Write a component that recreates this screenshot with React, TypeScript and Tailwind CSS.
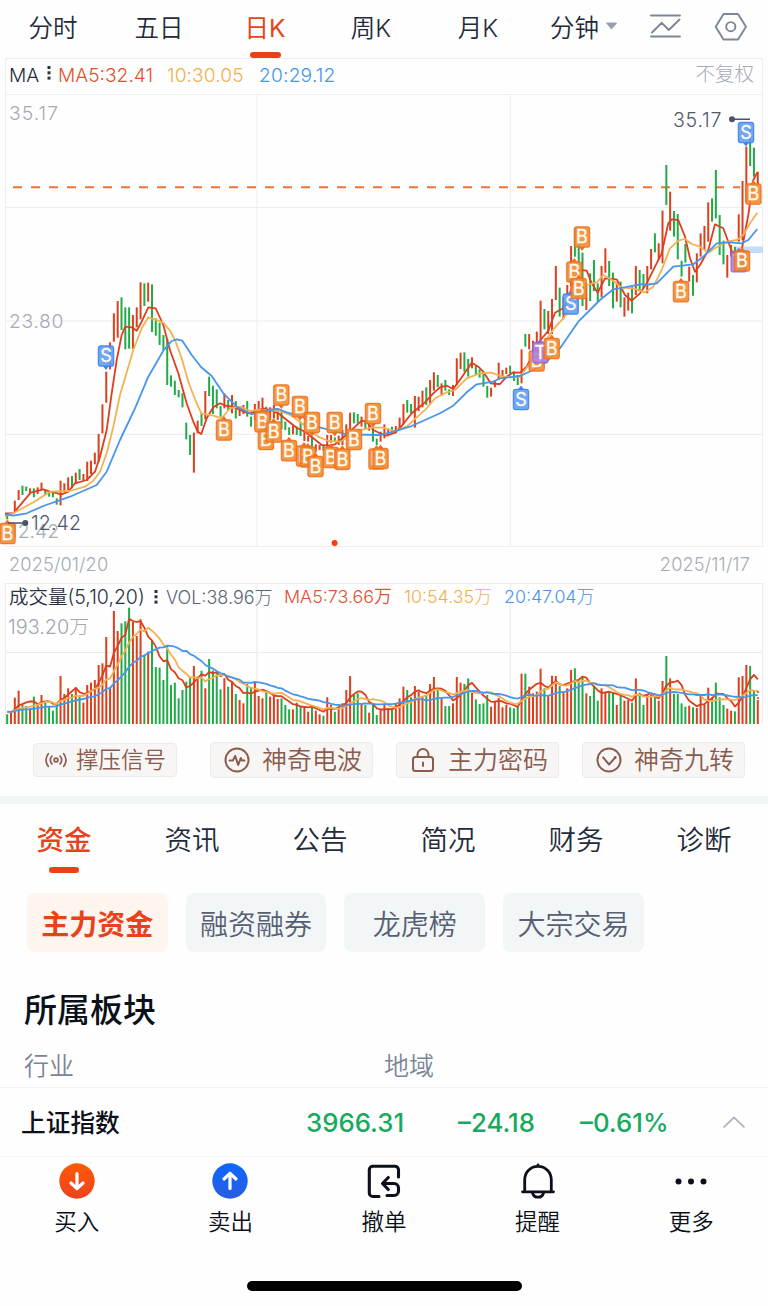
import type { ReactNode } from 'react';

const STEP = 3.81;
const FIRST_X = 7.2;
const RED = '#dd3f1d';
const GREEN = '#1fab47';
const YELLOW = '#f2b252';
const BLUE = '#4795ec';
const FONT = 'font-[Inter,"Noto_Sans_CJK_SC",sans-serif]';

const barX = (i: number) => FIRST_X + i * STEP;

/* Candles: direction, high and low, in thirds of a pixel below the block's base line. */
const candleBlocks: { start: number; base: number; rows: string }[] = [
  {
    start: 0,
    base: 270,
    rows: 'g733,748 r728,738 r692,725 r660,690 g647,675 g650,663 r655,672 g655,682 r652,672 r638,660 g660,675 g665,680 g668,682 g685,704 r632,706 r640,665 r622,660 g618,655 r608,640 g597,630 r612,632 r575,633 r572,612 r548,583 r492,575 r403,490 r305,398 r217,298 r130,215 r93,203 g82,180 g112,238 g112,236 r135,236 r112,172 r37,148 g40,108 r38,95 g43,186 g145,197 g158,225 g195,240 g207,345 g316,350 g332,375 g360,382 g370,412 g458,508 g495,555 r488,608 r452,490 g430,468 r363,448 g320,378 g347,432 g358,415 g408,440 r370,415 g390,420 r375,430 g393,445 r410,438 r405,432 g393,440',
  },
  {
    start: 64,
    base: 330,
    rows: 'g260,290 r222,270 r213,240 r203,240 g230,255 r232,270 r225,265 r235,270 g240,298 g275,300 g292,315 r288,313 g290,315 g275,318 r300,333 r318,335 g320,350 r343,365 r345,360 g345,362 r315,350 r315,338 g322,335 r317,345 r300,345 r283,320 r248,300 g247,280 g252,280 r260,290 g270,295 r280,302 g290,335 g326,345 r305,335 r283,325 r298,315 g290,308 r288,310 r263,298 r222,283 g210,248 g222,250 r198,293 r200,243 r182,232 g172,225 r150,222 r127,182 g135,172 r160,198 g150,182 g178,195 r165,198 r85,165 r68,117 g67,125 g87,140 r82,115 g105,135 g118,143 g125,170 g168,203 r173,200 r150,172 r98,150',
  },
  {
    start: 130,
    base: 220,
    rows: 'r450,468 r443,462 g437,460 g455,483 g465,495 r388,490 g342,380 r342,388 r362,420 r335,400 r242,360 g267,328 r273,342 r237,342 r138,240 g203,290 r232,298 r195,225 r78,200 g25,110 g75,130 g98,258 r190,270 g160,243 g120,213 g190,245 r138,232 r85,158 g123,198 g158,265 r187,245 g185,262 r232,290 r218,272 g200,280 r138,225 g150,213 g162,205 r138,220 r87,148 g40,97 r70,118',
  },
  {
    start: 172,
    base: 90,
    rows: 'r362,520 g225,345 r305,422 g363,440 g372,508 g512,560 g462,518 r530,575 g555,617 r490,577 r430,500 r408,480 r337,455 g325,395 g240,385 g375,495 g452,523 r495,563 r465,500 g470,500 r373,455 r273,450 r170,335 g110,228 g173,260 r245,285',
  },
];

const candles = candleBlocks.flatMap(({ start, base, rows }) =>
  rows.split(' ').map((row, k) => {
    const [hi, lo] = row.slice(1).split(',').map(Number);
    return { x: barX(start + k), y1: base + hi / 3, y2: base + lo / 3, color: row[0] === 'r' ? RED : GREEN };
  }),
);

/* Line segments share the candles' third-pixel units, with a block origin. */
type Segment = [number, number, string];
const toPoints = (segments: Segment[]) =>
  segments
    .flatMap(([ox, oy, pts]) =>
      pts.split(' ').map((p) => {
        const [x, y] = p.split(',').map(Number);
        return `${(ox + x / 3).toFixed(1)},${(oy + y / 3).toFixed(1)}`;
      }),
    )
    .join(' ');

const ma5 = toPoints([
  [0, 270, '15,730 40,730 92,668 130,658 150,665 185,673 205,665 225,640 260,630 285,605 300,560 320,480 335,370 350,270 365,195 376,170 395,172 410,182 425,155 445,112 467,115 490,165 510,240 535,310 560,400 580,455 593,485 604,492 620,445 640,412 660,400 680,408 700,410 720,420 740,428'],
  [250, 330, '0,250 20,243 40,235 60,240 85,250 110,270 140,293 165,305 190,325 215,345 235,347 255,343 270,330 285,318 310,295 335,272 350,275 370,300 390,310 410,317 435,308 455,288 485,250 520,222 550,190 570,172 590,167 610,177 640,135 665,98 685,110 700,125 722,160 745,162'],
  [500, 220, '0,492 20,470 40,457 60,458 80,440 100,400 120,362 145,332 165,278 180,270 195,262 210,220 225,170 240,150 260,152 275,190 293,218 315,175 350,178 375,225'],
  [620, 90, '35,632 60,610 80,580 105,530 125,490 145,400 155,388 175,390 195,440 210,505 225,545 240,525 265,480 285,403 310,415 325,455 335,483 350,500 365,480 385,375 400,270 412,247'],
]);
const ma10 = toPoints([
  [0, 270, '15,738 45,727 100,697 150,665 210,663 255,650 280,632 300,605 320,550 340,470 360,375 400,240 425,175 445,142 465,148 490,158 510,182 525,210 545,265 565,335 585,388 604,430 640,437 665,445 690,415 720,410'],
  [250, 330, '0,243 20,240 60,240 95,245 120,255 150,275 180,300 205,320 235,333 270,335 300,318 330,300 365,293 400,293 435,303 470,290 500,262 530,235 555,205 590,187 615,180 650,145 690,130 725,128 750,138'],
  [500, 220, '30,472 60,470 90,430 115,405 145,350 165,322 190,295 225,250 260,195 290,187 310,165 340,182 365,203 400,205 435,217'],
  [620, 90, '100,590 125,540 150,475 175,452 195,447 215,462 240,470 265,488 285,475 320,455 350,450 370,435 390,400 412,368'],
]);
const ma20 = toPoints([
  [0, 270, '15,733 40,737 80,730 130,708 210,680 290,645 320,605 360,510 405,415 445,320 490,242 515,213 530,208 547,212 575,255 604,292 635,318 670,370 710,410'],
  [250, 330, '5,253 50,240 85,237 110,247 160,262 200,290 240,300 290,313 390,315 430,305 480,290 530,268 570,250 610,227 650,187 680,163 730,155'],
  [500, 220, '0,475 60,468 100,450 140,425 180,385 235,305 300,240 340,208 385,200 430,192'],
  [620, 90, '75,585 110,580 160,530 220,523 250,500 290,460 330,457 365,460 385,450 412,417'],
]);

type Marker = [string, number, number, 'up' | 'down' | ''];
const markers: Marker[] = [
  ['S', 106, 356, 'down'],
  ['B', 224, 430, 'up'],
  ['B', 7.5, 533.5, 'up'],
  ['B', 266, 439.5, 'up'],
  ['B', 262.3, 421.7, 'up'],
  ['B', 273.7, 432, 'up'],
  ['B', 281.3, 395, 'down'],
  ['B', 289, 450.7, 'up'],
  ['B', 300, 406.7, 'down'],
  ['B', 304, 456, 'up'],
  ['B', 308, 457, 'up'],
  ['B', 312, 422.5, 'down'],
  ['B', 315.5, 466.5, 'up'],
  ['B', 331, 457.5, 'up'],
  ['B', 342.3, 459.3, 'up'],
  ['B', 334.7, 422.5, 'down'],
  ['B', 354, 439.5, ''],
  ['B', 373, 413.5, 'down'],
  ['B', 376.5, 459, 'up'],
  ['B', 380.5, 458.5, 'up'],
  ['S', 521, 399.5, 'up'],
  ['B', 536.7, 361, 'up'],
  ['T', 540.3, 352.7, 'up'],
  ['B', 551.7, 348.5, 'up'],
  ['B', 582, 237, 'down'],
  ['S', 570.7, 304, 'up'],
  ['B', 574.3, 272, 'up'],
  ['B', 578.7, 288.5, 'up'],
  ['B', 681, 291.7, 'up'],
  ['T', 738.7, 261.7, 'up'],
  ['B', 742, 261, 'up'],
  ['B', 753.4, 194, 'up'],
  ['S', 746, 132.5, 'down'],
];
const markerColors: Record<string, [string, string]> = {
  B: ['#ef8a2c', '#f26d1e'],
  S: ['#5c9cf3', '#3f80ea'],
  T: ['#aa80dc', '#9062d6'],
};

/* Volume: direction and the bar's top, in thirds of a pixel below y = 580. */
const VOLUME_BASE = 724;
const volumes = (
  'g403 r398 r353 r332 g375 g378 r385 g350 r375 r345 g368 g378 g392 g372 r288 r342 r325 g342 r322 g350 r368 r315 r308 r300 r255 r250 r171 r322 r93 r153 g130 g124 g83 r125 r168 r118 g225 r215 g180 g261 g263 g300 g197 g315 g308 g355 g330 g305 g290 r258 ' +
  'r290 g272 r325 g237 g272 g280 g328 r295 g320 r305 g342 r360 r370 g312 g322 r308 r348 r355 g332 r350 r348 r357 g355 g375 g388 r388 g368 g378 r380 r395 g380 r392 r403 g407 r352 r375 g395 r380 r370 r330 r288 g345 g340 r372 g375 r398 g375 g405 r390 r375 ' +
  'r387 g385 r370 r355 r320 g330 g352 r318 r335 r348 g345 r312 r291 g328 r355 g378 g378 r370 r291 r308 g312 g295 r338 g358 g372 g370 g345 r380 r362 r354 r382 r375 g382 g385 g380 r281 g281 r320 r340 r335 r266 g325 r348 r287 r288 g318 r335 r325 r270 g265 ' +
  'g302 g288 r340 g348 g318 g362 r325 r335 g335 g338 r375 g345 r362 r360 g368 r295 g338 g375 r345 r345 g348 r362 r303 g228 r295 g342 g342 g370 g380 r377 g382 r384 r348 r372 r323 g352 g308 g352 g375 r386 r392 g394 r292 r288 r255 g258 g330 r360'
)
  .split(' ')
  .map((row, i) => ({ x: barX(i), top: 580 + Number(row.slice(1)) / 3, color: row[0] === 'r' ? RED : GREEN }));

function average(period: number) {
  return volumes
    .map((v, i) => {
      let sum = 0;
      for (let k = 0; k < period; k++) sum += i - k >= 0 ? volumes[i - k].top : 711.6;
      return `${v.x.toFixed(1)},${(sum / period).toFixed(1)}`;
    })
    .join(' ');
}

function Dots() {
  return (
    <svg className="-mt-1" width="4" height="14" viewBox="0 0 4 14" fill="#2a3344">
      <rect x="0.5" y="0" width="3" height="3" />
      <rect x="0.5" y="5.3" width="3" height="3" />
      <rect x="0.5" y="10.6" width="3" height="3" />
    </svg>
  );
}

function MarkerBadge({ marker: [label, x, y, tip] }: { marker: Marker }) {
  const [fill, stroke] = markerColors[label];
  return (
    <g transform={`translate(${x} ${y})`}>
      {tip === 'up' && <path d="M-3 -10 L0 -14 L3 -10Z" fill={stroke} />}
      {tip === 'down' && <path d="M-3 10 L0 14 L3 10Z" fill={stroke} />}
      <rect x="-7.6" y="-10.2" width="15.2" height="20.4" rx="2.5" fill={fill} fillOpacity="0.88" stroke={stroke} strokeOpacity="0.85" strokeWidth="1.3" />
      <text y="6.4" textAnchor="middle" fontSize="18" fill="#fffaf0" stroke="#fffaf0" strokeWidth="0.3">
        {label}
      </text>
    </g>
  );
}

function PriceChart() {
  return (
    <svg className="block" width="768" height="453" viewBox="0 94 768 453">
      <g stroke="#edeeef" strokeWidth="1.2">
        <path d="M5 94.5H763M5 207.5H763M5 321H763M5 434.3H763M5 546.5H763" />
        <path d="M5.5 94V547M257 94V547M510.3 94V547M762.5 94V547" fill="none" />
      </g>
      <rect x="736" y="246.5" width="27" height="6.5" fill="#c3dcfa" />
      <path d="M13 187.3H740" stroke="#ee7433" strokeWidth="2" strokeDasharray="9 9" />
      <g fill="#a5abb7" fontSize="19.3" fontWeight="300">
        <text x="9" y="119.6" textLength="49">35.17</text>
        <text x="9" y="328" textLength="54.5">23.80</text>
        <text x="10" y="538" textLength="49">12.42</text>
      </g>
      {candles.map((c, i) => (
        <line key={i} x1={c.x} x2={c.x} y1={c.y1} y2={c.y2} stroke={c.color} strokeWidth="2" />
      ))}
      <g fill="none" strokeWidth="1.8" strokeLinejoin="round">
        <polyline points={ma5} stroke={RED} />
        <polyline points={ma10} stroke={YELLOW} />
        <polyline points={ma20} stroke={BLUE} />
      </g>
      <g fontWeight="400">
        {markers.map((m, i) => (
          <MarkerBadge key={i} marker={m} />
        ))}
      </g>
      <g fill="#4a5365" stroke="#4a5365">
        <path d="M732 119.3H750M8 523H25" strokeWidth="1.5" />
        <circle cx="732" cy="119.3" r="3" stroke="none" />
        <circle cx="25.3" cy="523" r="3" stroke="none" />
      </g>
      <g fill="#4f5869" fontSize="19.6" fontWeight="300">
        <text x="673" y="126.6" textLength="48.500">35.17</text>
        <text x="31" y="530.3" textLength="50">12.42</text>
      </g>
      <circle cx="334.6" cy="543" r="3" fill="#fb3c0b" />
    </svg>
  );
}

function VolumeChart() {
  return (
    <div className="grid h-[141px]">
      <svg className="col-start-1 row-start-1 block" width="768" height="141" viewBox="0 583 768 141">
        <path d="M5 583.5H763M5 652.5H763M5.5 583V724M257 583V724M510.3 583V724M762.5 583V724" stroke="#e9edef" strokeWidth="1.2" />
        {volumes.map((v, i) => (
          <rect key={i} x={v.x - 1} y={v.top} width="2" height={VOLUME_BASE - v.top} fill={v.color} />
        ))}
        <g fill="none" strokeWidth="1.8" strokeLinejoin="round">
          <polyline points={average(5)} stroke={RED} />
          <polyline points={average(10)} stroke={YELLOW} />
          <polyline points={average(20)} stroke={BLUE} />
        </g>
        <g fill={RED}>
          <circle cx="758" cy="692" r="1.1" />
          <circle cx="758" cy="698" r="1.1" />
        </g>
      </svg>
      <div className="col-start-1 row-start-1 flex flex-col pl-[9px]">
        <div className="flex h-7 items-center whitespace-nowrap text-[18px] font-light">
          <span className="w-[145px] pt-0.5 text-[19.5px] font-[350] text-[#2a3344]">成交量(5,10,20)</span>
          <div className="pt-1">
            <Dots />
          </div>
          <span className="ml-[8px] w-[118px] text-[#5b6475]">VOL:38.96万</span>
          <span className="w-[120px] text-[17.900px] font-[350] text-[#e4502e]">MA5:73.66万</span>
          <span className="w-[100px] text-[17.800px] text-[#f0b14f]">10:54.35万</span>
          <span className="text-[17.800px] text-[#4795ec]">20:47.04万</span>
        </div>
        <span className="-ml-px mt-0.5 h-7 text-[19.800px] leading-7 font-light text-[#a0a6b3]">193.20万</span>
      </div>
    </div>
  );
}

const line = { fill: 'none', stroke: '#8a5c4e', strokeWidth: 2, strokeLinecap: 'round', strokeLinejoin: 'round' } as const;

const tools: { label: string; box: string; text: string; icon: ReactNode }[] = [
  {
    label: '撑压信号',
    box: 'mr-[10px] h-[34px] w-[144px] gap-[8px] pl-[10px]',
    text: 'text-[22.5px]',
    icon: (
      <svg width="24" height="20" viewBox="0 0 24 20" {...line} strokeWidth={1.7}>
        <circle cx="12" cy="10" r="1.9" />
        <path d="M8 6a5.6 5.6 0 0 0 0 8M16 6a5.6 5.6 0 0 1 0 8M4.3 3.7a10 10 0 0 0 0 12.6M19.7 3.7a10 10 0 0 1 0 12.6" />
      </svg>
    ),
  },
  {
    label: '神奇电波',
    box: 'h-[36px] w-[163px] gap-[12px] pl-[13px]',
    text: 'text-[25px]',
    icon: (
      <svg width="26" height="26" viewBox="0 0 26 26" {...line}>
        <circle cx="13" cy="13" r="11.5" />
        <path d="M5.5 13.5h3.3l2.4-4.5 3 9 2.6-7 1.2 2.5h2.5" />
      </svg>
    ),
  },
  {
    label: '主力密码',
    box: 'h-[36px] w-[163px] gap-[12px] pl-[13px]',
    text: 'text-[25px]',
    icon: (
      <svg width="26" height="26" viewBox="0 0 26 26" {...line}>
        <rect x="3" y="10" width="20" height="14" rx="2.5" />
        <path d="M7.5 10V7.500a5.500 5.500 0 0 1 11 0V10M13 15.5v3.5" />
      </svg>
    ),
  },
  {
    label: '神奇九转',
    box: 'h-[36px] w-[163px] gap-[12px] pl-[13px]',
    text: 'text-[25px]',
    icon: (
      <svg width="26" height="26" viewBox="0 0 26 26" {...line}>
        <circle cx="13" cy="13" r="11.5" />
        <path d="M7.5 10.8 13 17.5l6-6.7" />
        <circle cx="7.3" cy="10.5" r="1" fill="#8a5c4e" stroke="none" />
        <circle cx="19.2" cy="10.5" r="1.4" fill="#8a5c4e" stroke="none" />
      </svg>
    ),
  },
];

const actions: { label: string; icon: ReactNode }[] = [
  {
    label: '买入',
    icon: (
      <svg width="36" height="36" viewBox="0 0 36 36">
        <defs>
          <linearGradient id="buy" x1="0" y1="0" x2="0" y2="1">
            <stop stopColor="#ff5a05" />
            <stop offset="1" stopColor="#ea4320" />
          </linearGradient>
        </defs>
        <circle cx="18" cy="18" r="17.7" fill="url(#buy)" />
        <path d="M18 10.5V25M12 20l6 5.7 6-5.7" fill="none" stroke="#fff" strokeWidth="3.2" strokeLinecap="round" strokeLinejoin="round" />
      </svg>
    ),
  },
  {
    label: '卖出',
    icon: (
      <svg width="36" height="36" viewBox="0 0 36 36">
        <defs>
          <linearGradient id="sell" x1="0" y1="0" x2="0" y2="1">
            <stop stopColor="#0b68ff" />
            <stop offset="1" stopColor="#2a5ce0" />
          </linearGradient>
        </defs>
        <circle cx="18" cy="18" r="17.7" fill="url(#sell)" />
        <path d="M18 25.5V11M12 16l6-5.7 6 5.7" fill="none" stroke="#fff" strokeWidth="3.2" strokeLinecap="round" strokeLinejoin="round" />
      </svg>
    ),
  },
  {
    label: '撤单',
    icon: (
      <svg width="36" height="36" viewBox="0 0 36 36" fill="none" stroke="#0c1018" strokeWidth="3.1" strokeLinecap="round" strokeLinejoin="round">
        <path d="M13 33.500H6.800a3.500 3.500 0 0 1-3.500-3.500V6.800a3.500 3.500 0 0 1 3.500-3.500H29a3.500 3.500 0 0 1 3.500 3.500V14" />
        <path d="M22.300 14.500l-5.800 6 5.800 6M17.500 20.500h10.500a4.500 4.500 0 0 1 4.500 4.500v3a4.500 4.500 0 0 1-4.500 4.500H21" />
      </svg>
    ),
  },
  {
    label: '提醒',
    icon: (
      <svg width="36" height="36" viewBox="0 0 36 36" fill="none" stroke="#0c1018" strokeWidth="2.8" strokeLinecap="round" strokeLinejoin="round">
        <path d="M2.500 28.800H33.500M4.700 28.500V17C4.700 9 10.500 3.300 18 3.300S31.300 9 31.300 17V28.500M18 2v1" />
        <path d="M12.500 30c.8 2.700 3 4.200 5.500 4.200s4.700-1.500 5.500-4.200" />
      </svg>
    ),
  },
  {
    label: '更多',
    icon: (
      <svg width="36" height="36" viewBox="0 0 36 36" fill="#0c1018">
        <circle cx="5.500" cy="18.500" r="3" />
        <circle cx="18" cy="18.500" r="3" />
        <circle cx="30.500" cy="18.500" r="3" />
      </svg>
    ),
  },
];

export default function App() {
  return (
    <div className={`flex h-[1306px] w-[768px] flex-col overflow-hidden bg-[#fefefe] text-[#232b3b] ${FONT}`}>
      <nav className="flex h-[58px] shrink-0 text-[24.500px] leading-[57px] font-[350]">
        {['分时', '五日', '日K', '周K', '月K'].map((label) => (
          <div
            key={label}
            className={`flex flex-col items-center ${label === '月K' ? 'w-[108px]' : 'w-[106px]'} ${label === '日K' ? 'font-normal text-[#e9421b]' : ''}`}
          >
            <span className="h-[52px]">{label}</span>
            {label === '日K' && <span className="h-[6px] w-[31px] rounded-full bg-[#e9421b]" />}
          </div>
        ))}
        <div className="flex flex-1 pl-[18px]">
          <span className="w-[55px]">分钟</span>
          <svg className="mt-[22px]" width="13" height="9" viewBox="0 0 13 9">
            <path d="M1.500 1h10L6.500 7Z" fill="#98a0af" stroke="#98a0af" strokeLinejoin="round" />
          </svg>
          <svg className="mt-[13px] ml-[31px]" width="33" height="26" viewBox="0 0 33 26" fill="none" stroke="#7c8697" strokeWidth="1.900" strokeLinecap="round" strokeLinejoin="round">
            <path d="M2 2.500H31M2 23.500H31M3 19.500 12.800 9.800l7 7.200L30.500 6.500" />
          </svg>
          <svg className="mt-[12px] ml-[32px]" width="34" height="30" viewBox="0 0 34 30" fill="none" stroke="#7c8697" strokeWidth="1.900" strokeLinejoin="round">
            <path d="M9.500 2H24L32 14.700 24 27.500H9.500L1.700 14.700Z" />
            <circle cx="16.800" cy="14.700" r="4.600" />
          </svg>
        </div>
      </nav>

      <div className="mx-[5px] flex h-9 shrink-0 items-center whitespace-nowrap border border-b-0 border-[#edeeef] px-[3px] pr-2 pb-[3px] text-[19.200px] font-light">
        <span className="w-[38px] font-[350]">MA</span>
        <Dots />
        <span className="ml-[7px] w-[109px] font-[350] text-[#e4502e]">MA5:32.41</span>
        <span className="w-[92px] tracking-[0.100px] text-[#f0b14f]">10:30.05</span>
        <span className="tracking-[0.200px] text-[#4795ec]">20:29.12</span>
        <span className="ml-auto text-[19.500px] text-[#a5abb7]">不复权</span>
      </div>
      <div className="h-[453px] shrink-0">
        <PriceChart />
      </div>
      <div className="flex h-9 shrink-0 items-center justify-between pr-[18px] pl-[9px] text-[18.200px] font-light tracking-[0.150px] text-[#a5abb7]">
        <span>2025/01/20</span>
        <span>2025/11/17</span>
      </div>
      <VolumeChart />

      <div className="flex h-[72px] shrink-0 items-center gap-[23px] pl-[33px]">
        {tools.map((t) => (
          <div key={t.label} className={`flex shrink-0 items-center whitespace-nowrap rounded-[4px] border border-[#eeebe8] bg-[#f8f6f4] text-[#8a5c4e] ${t.box}`}>
            {t.icon}
            <span className={`leading-8 font-[350] ${t.text}`}>{t.label}</span>
          </div>
        ))}
      </div>
      <div className="h-2 shrink-0 bg-[#f2f6f7]" />

      <div className="grid h-[89px] shrink-0 grid-cols-6 text-[27.500px] leading-[73px] font-[350]">
        {['资金', '资讯', '公告', '简况', '财务', '诊断'].map((label, i) => (
          <div key={label} className={`flex flex-col items-center ${i === 0 ? 'font-medium text-[#e9421b]' : ''}`}>
            <span className="h-[63px]">{label}</span>
            {i === 0 && <span className="h-[6px] w-[30px] rounded-full bg-[#e9421b]" />}
          </div>
        ))}
      </div>
      <div className="flex h-[59px] shrink-0 gap-[18px] pl-[27px] text-[28px]">
        {['主力资金', '融资融券', '龙虎榜', '大宗交易'].map((label, i) => (
          <div
            key={label}
            className={`flex w-[140.700px] items-center justify-center rounded-lg pt-1 ${i === 0 ? 'bg-[#fff5ef] font-bold text-[#e9421b]' : 'bg-[#f2f6f7] font-[350] text-[#565f73]'}`}
          >
            {label}
          </div>
        ))}
      </div>
      <h2 className="mt-[35px] h-[47px] shrink-0 pl-[24px] text-[33px] leading-[46px] font-medium text-[#0c1018]">所属板块</h2>
      <div className="flex h-[53px] shrink-0 pl-[24px] text-[25px] leading-[65px] font-[350] text-[#7c8598]">
        <span className="w-[360px]">行业</span>
        <span>地域</span>
      </div>
      <div className="flex h-[70px] shrink-0 items-center border-y border-[#f3f4f5] pt-[3px] pl-[21px] text-[25.800px] font-medium text-[#16aa5f]">
        <span className="w-[285px] text-[24.700px] text-[#0c1018]">上证指数</span>
        <span className="w-[152px]">3966.31</span>
        <span className="w-[122px]">–24.18</span>
        <span className="w-[142px]">–0.61%</span>
        <svg className="-mt-1" width="24" height="14" viewBox="0 0 24 14" fill="none" stroke="#a6adba" strokeWidth="1.700">
          <path d="M1.500 12.500 12 2.500l10.500 10" />
        </svg>
      </div>
      <div className="grid h-[85px] shrink-0 grid-cols-5 pt-[6px] text-[22.500px] text-[#0c1018]">
        {actions.map((a) => (
          <div key={a.label} className="flex flex-col items-center">
            {a.icon}
            <span className="mt-[7px] leading-8 font-[350]">{a.label}</span>
          </div>
        ))}
      </div>
      <div className="mx-auto mt-[39px] h-[10px] w-[275px] shrink-0 rounded-full bg-black" />
    </div>
  );
}
